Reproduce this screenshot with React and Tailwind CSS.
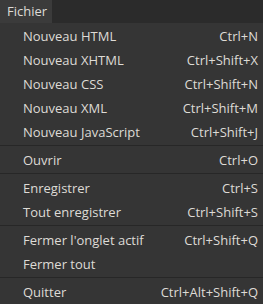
import React from "react";

const groups = [
  [
    ["Nouveau HTML", "Ctrl+N"],
    ["Nouveau XHTML", "Ctrl+Shift+X"],
    ["Nouveau CSS", "Ctrl+Shift+N"],
    ["Nouveau XML", "Ctrl+Shift+M"],
    ["Nouveau JavaScript", "Ctrl+Shift+J"],
  ],
  [["Ouvrir", "Ctrl+O"]],
  [
    ["Enregistrer", "Ctrl+S"],
    ["Tout enregistrer", "Ctrl+Shift+S"],
  ],
  [
    ["Fermer l'onglet actif", "Ctrl+Shift+Q"],
    ["Fermer tout", ""],
  ],
  [["Quitter", "Ctrl+Alt+Shift+Q"]],
];

export default function App() {
  return (
    <div
      className="w-[263px] h-[304px] bg-[#353535] text-[#dedbd6] text-[13px] overflow-hidden"
      style={{ fontFamily: '"Open Sans", "Noto Sans", sans-serif' }}
    >
      <div className="h-[23px] bg-[#2b2b2b] flex">
        <div className="h-[23px] w-[52px] bg-[#3b3b3b] flex items-center pl-[7px] leading-none">
          Fichier
        </div>
      </div>
      <div className="pt-px">
        {groups.map((g, gi) => (
          <div key={gi}>
            {gi > 0 && (
              <div className="mt-px mb-[2px] h-px bg-[#272727]" />
            )}
            {g.map(([label, sc]) => (
              <div
                key={label}
                className="h-6 flex items-center justify-between pl-[23px] pr-[5px] leading-none whitespace-nowrap"
              >
                <span>{label}</span>
                <span>{sc}</span>
              </div>
            ))}
          </div>
        ))}
      </div>
    </div>
  );
}
